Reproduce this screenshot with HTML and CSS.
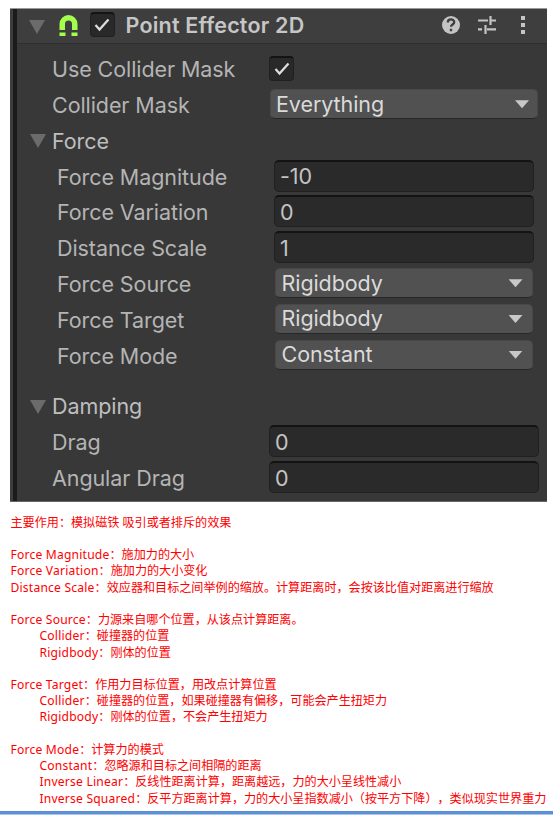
FILE: index.html
```html
<!DOCTYPE html>
<html lang="zh-CN">
<head>
<meta charset="utf-8">
<title>Point Effector 2D</title>
<link rel="stylesheet" href="styles.css">
</head>
<body>
<main class="page">
  <section class="panel">
    <header class="head">
      <svg class="fold" viewBox="0 0 16 14"><path d="M0 0h16L8 14z"/></svg>
      <svg class="magnet" viewBox="0 0 18 22"><path d="M0 15V9a9 9 0 0 1 18 0v6h-5.500V9a3.500 3.500 0 0 0-7 0v6zM0 17.500h6V21H0zM12 17.500h6V21h-6z"/></svg>
      <span class="check"><svg viewBox="0 0 16 14"><path d="M1.500 7l4 4.500 9-10"/></svg></span>
      <h1 class="title">Point Effector 2D</h1>
      <svg class="tools" viewBox="0 0 84 20">
        <circle cx="9" cy="10" r="9"/>
        <path class="cut" d="M5.800 7.500c0-4 6.400-4 6.400-.2 0 2.300-3.200 2-3.200 4.400M9 13.700v2.600"/>
        <path class="line" d="M36 5.500h10M49 5.500h5M48.500 1v9M36 14.300h4M45 14.300h9M43.500 10v9"/>
        <path d="M79 1h4v4h-4zM79 8h4v4h-4zM79 15h4v4h-4z"/>
      </svg>
    </header>
    <div class="rows">
      <div class="row"><span class="label">Use Collider Mask</span><span class="check"><svg viewBox="0 0 16 14"><path d="M1.500 7l4 4.500 9-10"/></svg></span></div>
      <div class="row"><span class="label">Collider Mask</span><span class="select wide">Everything<i class="caret"></i></span></div>
      <div class="row section"><svg class="fold" viewBox="0 0 16 14"><path d="M0 0h16L8 14z"/></svg><span class="label">Force</span></div>
      <div class="row sub"><span class="label">Force Magnitude</span><span class="field">-10</span></div>
      <div class="row sub"><span class="label">Force Variation</span><span class="field">0</span></div>
      <div class="row sub"><span class="label">Distance Scale</span><span class="field">1</span></div>
      <div class="row sub"><span class="label">Force Source</span><span class="select">Rigidbody<i class="caret"></i></span></div>
      <div class="row sub"><span class="label">Force Target</span><span class="select">Rigidbody<i class="caret"></i></span></div>
      <div class="row sub"><span class="label">Force Mode</span><span class="select">Constant<i class="caret"></i></span></div>
      <div class="row section gap"><svg class="fold" viewBox="0 0 16 14"><path d="M0 0h16L8 14z"/></svg><span class="label">Damping</span></div>
      <div class="row"><span class="label">Drag</span><span class="field wide">0</span></div>
      <div class="row"><span class="label">Angular Drag</span><span class="field wide">0</span></div>
    </div>
  </section>
  <section class="notes">
    <p>主要作用：模拟磁铁 吸引或者排斥的效果</p>
    <p class="para"><b>Force Magnitude</b>：施加力的大小</p>
    <p><b>Force Variation</b>：施加力的大小变化</p>
    <p><b>Distance Scale</b>：效应器和目标之间举例的缩放。计算距离时，会按该比值对距离进行缩放</p>
    <p class="para"><b>Force Source</b>：力源来自哪个位置，从该点计算距离。</p>
    <p class="in"><b>Collider</b>：碰撞器的位置</p>
    <p class="in"><b>Rigidbody</b>：刚体的位置</p>
    <p class="para"><b>Force Target</b>：作用力目标位置，用改点计算位置</p>
    <p class="in"><b>Collider</b>：碰撞器的位置，如果碰撞器有偏移，可能会产生扭矩力</p>
    <p class="in"><b>Rigidbody</b>：刚体的位置，不会产生扭矩力</p>
    <p class="para"><b>Force Mode</b>：计算力的模式</p>
    <p class="in"><b>Constant</b>：忽略源和目标之间相隔的距离</p>
    <p class="in"><b>Inverse Linear</b>：反线性距离计算，距离越远，力的大小呈线性减小</p>
    <p class="in"><b>Inverse Squared</b>：反平方距离计算，力的大小呈指数减小（按平方下降），类似现实世界重力</p>
  </section>
  <div class="rule"></div>
</main>
</body>
</html>
```

FILE: styles.css
```css
* { box-sizing: border-box; }
body { margin: 0; background: #fff; }
.page { width: 560px; height: 820px; padding-top: 8px; overflow: hidden; }
.panel {
  width: 537px; height: 494px; margin-left: 10px;
  background: #383838; color: #b4b4b4;
  border-top: 1px solid #999; border-bottom: 1px solid #666;
  box-shadow: inset 3px 0 #3c3e3e, inset 7px 0 #1b1b1b;
  font: 21.5px/1 Inter, sans-serif; letter-spacing: -.08px;
}
.head {
  display: flex; align-items: center; height: 35px; margin-left: 7px; padding-top: 1px;
  background: #3e3e3e; border-bottom: 1.500px solid #2f2f2f;
}
.fold { width: 16px; height: 14px; fill: #6b6b6b; flex: none; }
.head .fold { margin-left: 11.500px; }
.magnet { width: 19px; height: 22px; margin: 0 0 2px 14px; fill: #a4ff4c; }
.check {
  display: flex; align-items: center; justify-content: center;
  width: 25px; height: 25px; border-radius: 4px;
  background: #292929; border: 1px solid #202020; border-top: 2px solid #131313;
}
.check svg { width: 16px; height: 14px; fill: none; stroke: #dedede; stroke-width: 2.200; }
.head .check { margin: 0 0 4px 12px; }
.title { margin: 0 0 1px 11px; font-size: 21.500px; font-weight: 600; letter-spacing: .2px; color: #c6c6c6; width: 316.500px; }
.tools { width: 84px; height: 20px; fill: #c4c4c4; margin-bottom: 3px; flex: none; }
.cut { fill: none; stroke: #3e3e3e; stroke-width: 2.300; }
.line { fill: none; stroke: #c4c4c4; stroke-width: 2.200; }
.rows { padding: 8.100px 0 0 42px; }
.row { display: flex; align-items: center; height: 35.800px; white-space: nowrap; }
.label { width: 217px; flex: none; }
.sub { padding-left: 5px; }
.section { margin-left: -22px; color: #bebebe; }
.section .fold { margin-bottom: 1px; }
.section .label { margin-left: 6px; }
.gap { margin-top: 14.900px; }
.row .check { margin: 0 0 3px; }
.field, .select { display: flex; align-items: center; width: 260px; padding-left: 6px; border-radius: 5px; color: #c4c4c4; }
.field { height: 32px; margin-bottom: 3.500px; padding-top: 2px; background: #2a2a2a; border: 1px solid #202020; border-top: 2px solid #131313; padding-left: 5px; }
.select { justify-content: space-between; width: 258px; height: 30px; margin: 0 0 3px .5px; padding-right: 9px; background: #515151; border: 1px solid #484848; border-bottom: 1.500px solid #262626; color: #dadada; }
.field.wide { width: 270px; }
.select.wide { width: 268px; margin-left: 1px; padding-left: 5px; padding-right: 8px; }
.caret { width: 14px; height: 8px; background: #c8c8c8; clip-path: polygon(0 0, 100% 0, 50% 100%); }
.notes {
  padding: 12.800px 0 0 10.500px; color: #f00; white-space: nowrap;
  font: 12.100px/16.230px "Noto Sans", "Noto Sans CJK SC", sans-serif;
  text-spacing-trim: space-all;
}
.notes p { margin: 0; height: 16.230px; }
.notes b { font-weight: 400; letter-spacing: .2px; }
.notes .para { margin-top: 16.230px; }
.notes .in { padding-left: 29px; }
.rule { width: 553px; height: 4px; margin-top: 4.500px; background: #5b8fd6; border-bottom: 1px solid #a9c5eb; }
```
